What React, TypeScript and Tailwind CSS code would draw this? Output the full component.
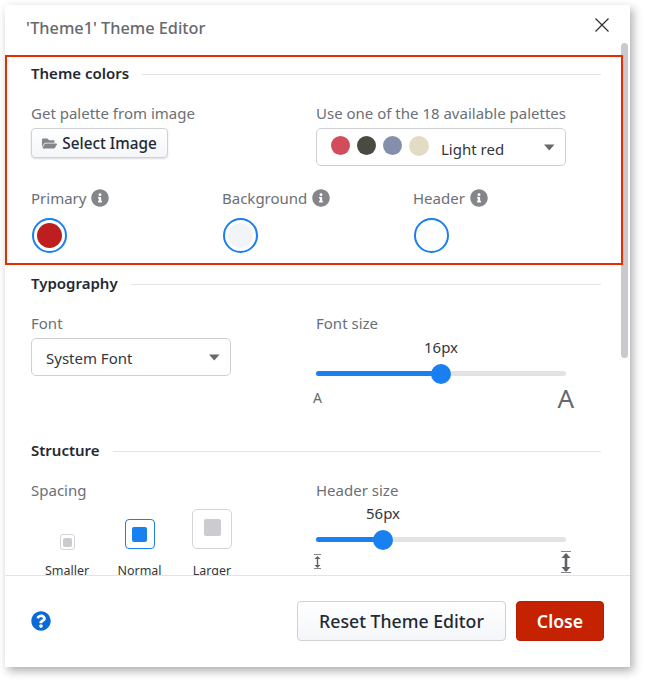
import React from 'react';
import { FaFolderOpen, FaInfoCircle, FaQuestionCircle } from 'react-icons/fa';

const Heading = ({ title, className = '' }: { title: string; className?: string }) => (
    <div className={`flex items-center gap-[13px] h-5 ${className}`}>
        <h3 className="text-[15px] leading-5 font-semibold text-[#1f2933] mb-[2px]">{title}</h3>
        <div className="flex-1 h-px bg-[#e2e3e5]" />
    </div>
);

const Label = ({ children }: { children: React.ReactNode }) => (
    <div className="text-[15px] leading-5 text-[#6b6f76]">{children}</div>
);

const Caret = () => (
    <svg width="11" height="7" viewBox="0 0 11 7" className="shrink-0">
        <path d="M0 0.5h10.5L5.25 6.5z" fill="#66696e" />
    </svg>
);

const ColorField = ({ label, color }: { label: string; color?: string }) => (
    <div className="w-[191px] shrink-0">
        <div className="flex items-center gap-[5px] h-5">
            <Label>{label}</Label>
            <FaInfoCircle className="text-[#85868a] text-[18px]" />
        </div>
        <div className="mt-[10px] ml-px w-[35px] h-[35px] rounded-full border-2 border-[#1a7ff0] flex items-center justify-center">
            {color && <div className="w-[25px] h-[25px] rounded-full" style={{ backgroundColor: color }} />}
        </div>
    </div>
);

const Slider = ({ value, percent }: { value: string; percent: number }) => (
    <div className="relative w-[250px]">
        <div className="text-[15px] leading-5 text-[#33373d] text-center absolute -top-[34px] -translate-x-1/2" style={{ left: `${percent}%` }}>
            {value}
        </div>
        <div className="h-[5px] rounded-full bg-[#e2e3e5]">
            <div className="h-full rounded-full bg-[#1a7ff0]" style={{ width: `${percent}%` }} />
        </div>
        <div
            className="absolute top-[-7.5px] w-5 h-5 rounded-full bg-[#1a7ff0] -translate-x-1/2"
            style={{ left: `${percent}%` }}
        />
    </div>
);

const TextHeightIcon = ({ size }: { size: 'sm' | 'lg' }) => {
    const w = size === 'sm' ? 7 : 10;
    const h = size === 'sm' ? 15 : 22;
    return (
        <svg width={w} height={h} viewBox={`0 0 ${w} ${h}`} className="block">
            <path d={`M0 0.5H${w}`} stroke="#85868a" strokeWidth="1" />
            <path d={`M0 ${h - 0.5}H${w}`} stroke="#85868a" strokeWidth="1" />
            <path d={`M${w / 2} 3V${h - 2}`} stroke="#5f6267" strokeWidth={size === 'sm' ? 1.4 : 2.6} />
            <path d={`M${w / 2} 2L${w - 0.5} ${size === 'sm' ? 5 : 7}H0.5z`} fill="#5f6267" />
            <path d={`M${w / 2} ${h - 1}L${w - 0.5} ${h - (size === 'sm' ? 4 : 6)}H0.5z`} fill="#5f6267" />
        </svg>
    );
};

const App = () => {
    return (
        <div className="w-[645px] h-[682px] bg-white pl-[5px] pt-[5px] font-['Noto_Sans',sans-serif]">
            <div className="relative w-[625px] h-[662px] bg-white flex flex-col shadow-[3px_4px_9px_rgba(0,0,0,0.32)]">
                <div className="h-[38px] shrink-0 flex items-center justify-between pl-[21px] pr-[20px] pt-[6px]">
                    <h2 className="text-[16.3px] leading-6 font-medium text-[#666a70] mt-[2px]">'Theme1' Theme Editor</h2>
                    <svg width="16" height="16" viewBox="0 0 16 16" className="-mt-[5px]">
                        <path d="M1.5 1.5l13 13M14.5 1.5l-13 13" stroke="#2a2d31" strokeWidth="1.2" />
                    </svg>
                </div>

                <div className="relative flex-1 min-h-0 overflow-hidden pl-[26px] pr-[29px] pt-[21px]">
                    <Heading title="Theme colors" />
                    <div className="grid grid-cols-[285px_1fr] mt-[19px]">
                        <div>
                            <Label>Get palette from image</Label>
                            <button className="mt-[5px] h-[30px] w-[137px] rounded-[4px] border border-[#d0d1d5] bg-gradient-to-b from-white to-[#f4f6f9] shadow-[0_1px_2px_rgba(0,0,0,0.14)] flex items-center justify-center gap-[5px]">
                                <FaFolderOpen className="text-[#85868a] text-[15px]" />
                                <span className="text-[15.3px] font-medium text-[#1f2933]">Select Image</span>
                            </button>
                        </div>
                        <div>
                            <Label>Use one of the 18 available palettes</Label>
                            <div className="mt-[5px] h-[38px] w-[250px] rounded-[5px] border border-[#cfd0d4] flex items-center pl-[14px] pr-[10px]">
                                <span className="w-[19px] h-[19px] rounded-full bg-[#d34c5c] -mt-[3px]" />
                                <span className="w-[19px] h-[19px] rounded-full bg-[#4a4a42] ml-[7px] -mt-[3px]" />
                                <span className="w-[19px] h-[19px] rounded-full bg-[#8490ab] ml-[7px] -mt-[3px]" />
                                <span className="w-[20px] h-[20px] rounded-full bg-[#e3dbc4] ml-[7px] -mt-[3px]" />
                                <span className="ml-[12px] text-[15px] leading-5 text-[#33373d] flex-1 mt-[3px]">Light red</span>
                                <Caret />
                            </div>
                        </div>
                    </div>
                    <div className="flex mt-[22px]">
                        <ColorField label="Primary" color="#bf1e1e" />
                        <ColorField label="Background" color="#f1f5f9" />
                        <ColorField label="Header" />
                    </div>

                    <Heading title="Typography" className="mt-[21px]" />
                    <div className="grid grid-cols-[285px_1fr] mt-[19px]">
                        <div>
                            <Label>Font</Label>
                            <div className="mt-[5px] h-[38px] w-[200px] rounded-[5px] border border-[#cfd0d4] flex items-center justify-between pl-[14px] pr-[10px]">
                                <span className="text-[15px] leading-5 text-[#33373d] mt-[2px]">System Font</span>
                                <Caret />
                            </div>
                        </div>
                        <div>
                            <Label>Font size</Label>
                            <div className="mt-[38px]">
                                <Slider value="16px" percent={50} />
                            </div>
                            <div className="w-[250px] flex justify-between items-start mt-[7px] -ml-[3px] text-[#66696e]">
                                <span className="text-[14px] leading-5 mt-[5px]">A</span>
                                <span className="text-[26px] leading-[30px] -mr-[11px]">A</span>
                            </div>
                        </div>
                    </div>

                    <Heading title="Structure" className="mt-[28px]" />
                    <div className="grid grid-cols-[285px_1fr] mt-[19px]">
                        <div>
                            <Label>Spacing</Label>
                            <div className="relative h-[76px] mt-[5px] flex items-end gap-[12.5px] pl-[6px] text-[12.5px] leading-5 text-[#33373d]">
                                <div className="w-[60px] flex flex-col items-center gap-[11px]">
                                    <div className="w-[15px] h-[16px] rounded-[3px] border border-[#d4d5d8] flex items-center justify-center">
                                        <div className="w-[9px] h-[9px] rounded-[2px] bg-[#cbccd0]" />
                                    </div>
                                    <span>Smaller</span>
                                </div>
                                <div className="w-[60px] flex flex-col items-center gap-[12px]">
                                    <div className="w-[30px] h-[30px] rounded-[4px] border border-[#1a7ff0] flex items-center justify-center">
                                        <div className="w-[15px] h-[15px] rounded-[2px] bg-[#1a7ff0]" />
                                    </div>
                                    <span>Normal</span>
                                </div>
                                <div className="w-[60px] flex flex-col items-center gap-[12px]">
                                    <div className="w-[40px] h-[40px] rounded-[5px] border border-[#d4d5d8] flex items-center justify-center">
                                        <div className="w-[17px] h-[17px] rounded-[2px] bg-[#cbccd0] -mt-[3px]" />
                                    </div>
                                    <span>Larger</span>
                                </div>
                            </div>
                        </div>
                        <div>
                            <Label>Header size</Label>
                            <div className="mt-[37px]">
                                <Slider value="56px" percent={26.8} />
                            </div>
                            <div className="w-[250px] flex justify-between items-start mt-[6px] -ml-[2px]">
                                <div className="mt-[6px]"><TextHeightIcon size="sm" /></div>
                                <div className="mt-[3px] -mr-[7px]"><TextHeightIcon size="lg" /></div>
                            </div>
                        </div>
                    </div>
                </div>

                <div className="h-[92px] shrink-0 border-t border-[#e2e3e5] flex items-center justify-between pl-[26px] pr-[26px] pb-[1px]">
                    <FaQuestionCircle className="text-[#0a6ad6] text-[20px]" />
                    <div className="flex gap-[10px]">
                        <button className="h-10 w-[209px] rounded-[4px] border border-[#d0d1d5] bg-gradient-to-b from-white to-[#f4f6f9] text-[17.7px] font-medium text-[#1f2933]">
                            Reset Theme Editor
                        </button>
                        <button className="h-10 w-[88px] rounded-[4px] bg-[#c42200] border border-[#b82000] text-[17.7px] font-semibold text-white">
                            Close
                        </button>
                    </div>
                </div>

                {/* scrollbar thumb */}
                <div className="absolute left-[616px] top-[38px] w-[7px] h-[315px] rounded-[4px] bg-[#c9cacd]" />
                {/* annotation box */}
                <div className="absolute left-0 top-[50px] w-[618px] h-[210px] border-2 border-[#e72c00] pointer-events-none" />
            </div>
        </div>
    );
};

export default App;
